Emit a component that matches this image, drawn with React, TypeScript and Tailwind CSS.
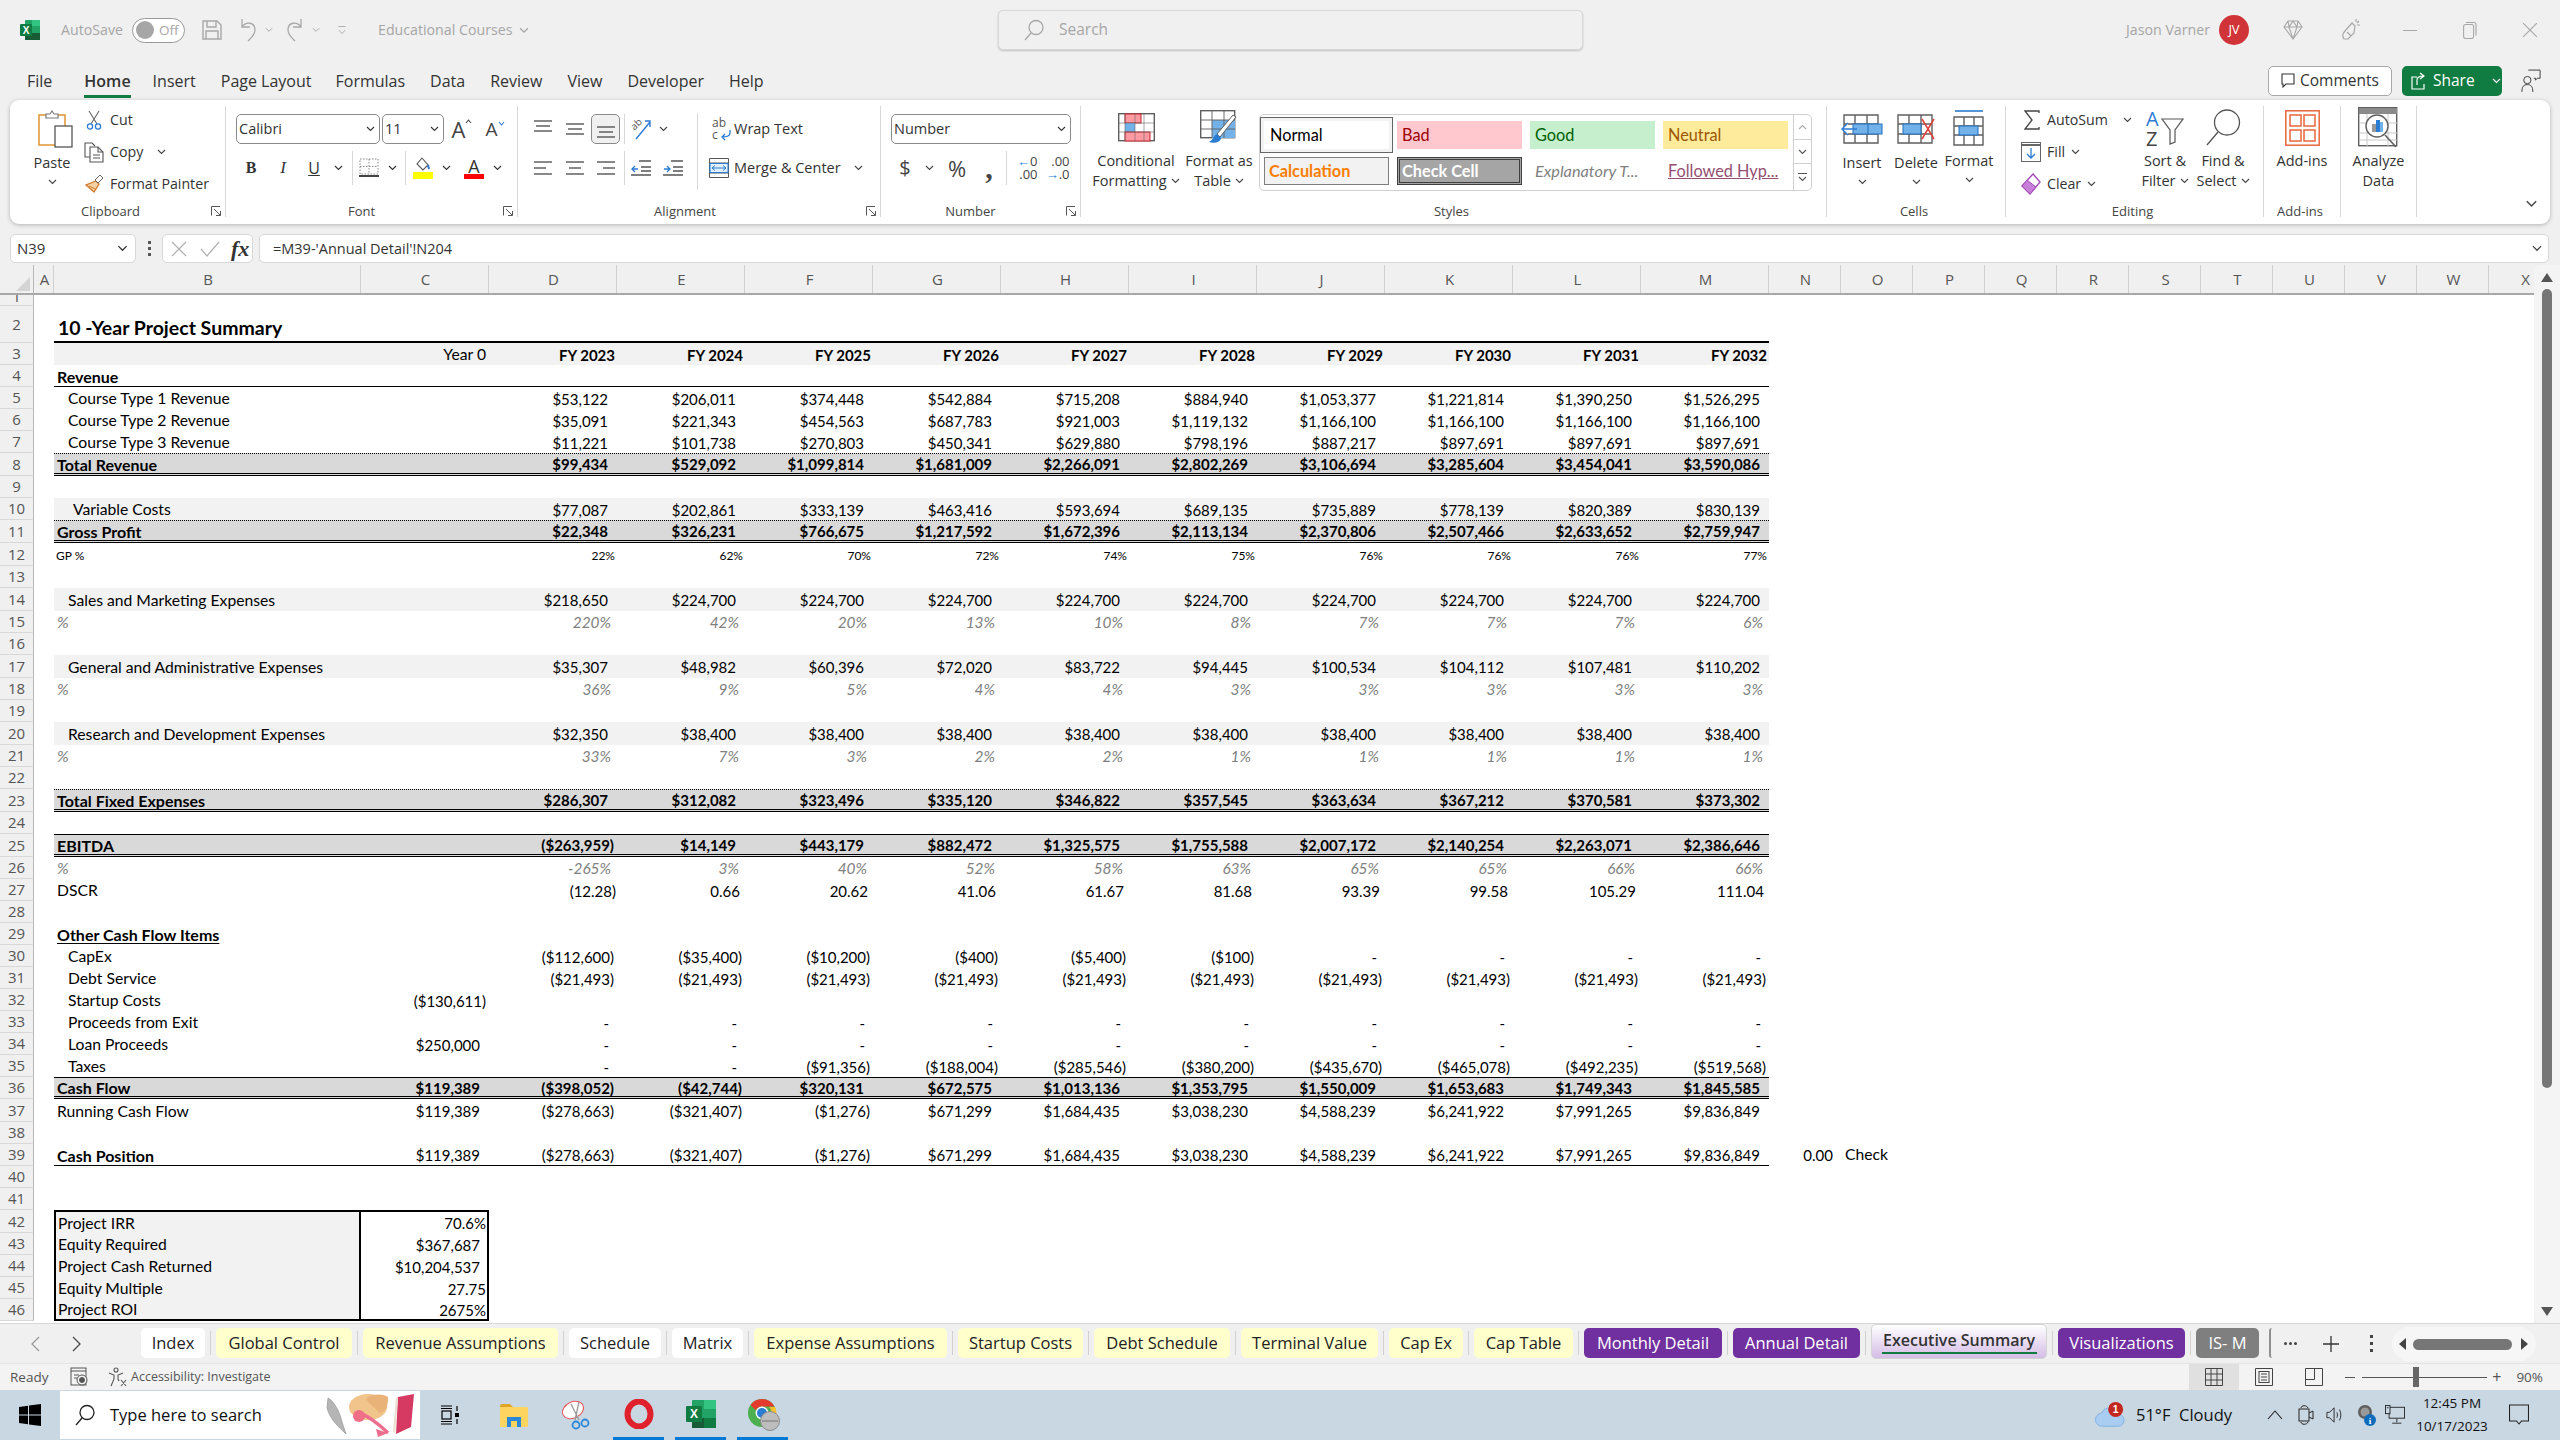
import React from 'react';

const Caret = ({ className = '' }: { className?: string }) => (
  <svg width="9" height="6" viewBox="0 0 9 6" className={className}><path d="M1 1l3.5 3.5L8 1" fill="none" stroke="currentColor" strokeWidth="1.1" /></svg>
);
const Launcher = () => (
  <svg width="10" height="10" viewBox="0 0 10 10" className="shrink-0 text-[#555]"><path d="M.5 9.5V.5h8.5M3 3l6.2 6.2M9.5 5v4.5H5" fill="none" stroke="currentColor" strokeWidth="1" /></svg>
);

const ExcelLogo = () => (
  <svg width="20" height="20" viewBox="0 0 20 20">
    <rect x="5" y="0" width="15" height="20" rx="1" fill="#21a366" />
    <rect x="12" y="0" width="8" height="6" fill="#33c481" />
    <rect x="5" y="13" width="15" height="7" fill="#185c37" />
    <rect x="0" y="4" width="12" height="12" rx="1" fill="#107c41" />
    <text x="6" y="13.5" fontSize="10" fontWeight="700" fill="#fff" textAnchor="middle" fontFamily="Liberation Sans">X</text>
  </svg>
);
const SaveIcon = () => (
  <svg width="20" height="20" viewBox="0 0 20 20" fill="none" stroke="#a8a8a8" strokeWidth="1.4"><path d="M1 1h14l4 4v14H1z" /><path d="M5 1v6h9V1M4 19v-8h12v8" /></svg>
);
const UndoIcon = ({ flip = false }: { flip?: boolean }) => (
  <svg width="18" height="24" viewBox="0 0 18 24" fill="none" stroke="#a8a8a8" strokeWidth="1.3" className={flip ? '-scale-x-100' : ''}><path d="M3 1v8h8M3 9c4-6 13-5 13 3 0 5-4 8-7 11" /></svg>
);
const CustomizeIcon = () => (
  <svg width="9" height="11" viewBox="0 0 9 11" fill="none" stroke="#a8a8a8"><path d="M.5 1h8M1 5l3.5 4L8 5" /></svg>
);
const MagIcon = ({ c = '#a8a8a8', s = 22 }: { c?: string; s?: number }) => (
  <svg width={s} height={s} viewBox="0 0 22 22" fill="none" stroke={c} strokeWidth="1.3"><circle cx="13" cy="8.5" r="7" /><path d="M8 14L2 21" /></svg>
);
const DiamondIcon = () => (
  <svg width="20" height="20" viewBox="0 0 20 20" fill="none" stroke="#a8a8a8" strokeWidth="1.1"><path d="M5 1h10l4 6-9 12L1 7zM1 7h18M6 7l4 12 4-12M5 1l1 6 4-6 4 6 1-6" /></svg>
);
const PenIcon = () => (
  <svg width="20" height="24" viewBox="0 0 20 24" fill="none" stroke="#a8a8a8" strokeWidth="1.2"><path d="M3 21c-2-3-1-6 1-8l7-8 3 3-1 7-6 6zM6 14l4 4M15 1v3M18 3l-2 2M19 7h-3" /></svg>
);
const CommentIcon = () => (
  <svg width="14" height="16" viewBox="0 0 14 16" fill="none" stroke="#333" strokeWidth="1.1"><path d="M1 1h12v10H5l-3 3v-3H1z" /></svg>
);
const ShareIcon = () => (
  <svg width="16" height="18" viewBox="0 0 16 18" fill="none" stroke="#fff" strokeWidth="1.2"><path d="M6 5H1v12h12v-5M6 13V8c0-3 3-4 6-4M9 1l4 3-4 3" /></svg>
);
const CoauthorIcon = () => (
  <svg width="22" height="26" viewBox="0 0 22 26" fill="none" stroke="#444" strokeWidth="1.1"><path d="M8 1h13v9h-3l-2 2v-2h-2" /><circle cx="7" cy="12" r="4" /><path d="M1 25c0-6 2-8 6-8s6 2 6 8" /></svg>
);

const PasteIcon = () => (
  <svg width="35" height="39" viewBox="0 0 35 39" fill="none">
    <rect x="1" y="6" width="26" height="30" fill="#fff" stroke="#e39a3f" strokeWidth="1.6" />
    <path d="M8 9V5h4l2-3 2 3h4v4z" fill="#fff" stroke="#7a7a7a" strokeWidth="1.2" />
    <rect x="17" y="17" width="17" height="21" fill="#fff" stroke="#555" strokeWidth="1.3" />
  </svg>
);
const CutIcon = () => (
  <svg width="16" height="20" viewBox="0 0 16 20" fill="none"><path d="M3 1l8 13M13 1L5 14" stroke="#666" strokeWidth="1.1" /><circle cx="4" cy="16.5" r="2.6" stroke="#2b7cd3" strokeWidth="1.3" /><circle cx="12" cy="16.5" r="2.6" stroke="#2b7cd3" strokeWidth="1.3" /></svg>
);
const CopyIcon = () => (
  <svg width="20" height="21" viewBox="0 0 20 21" fill="none" stroke="#555" strokeWidth="1.1"><path d="M6 15H1V1h7l3 3" fill="#fff" /><path d="M6 5h8l5 5v10H6z" fill="#fff" /><path d="M14 5v5h5M9 13h7M9 16h7" /></svg>
);
const PainterIcon = () => (
  <svg width="20" height="20" viewBox="0 0 20 20" fill="none"><path d="M12 7l3 3-5 8-8-7z" fill="#f3d2a6" stroke="#d4792a" strokeWidth="1.3" /><path d="M11 6l5-5 3 3-5 5z" fill="#fff" stroke="#666" /><path d="M5 12l6 3" stroke="#d4792a" /></svg>
);
const GrowA = ({ up }: { up: boolean }) => (
  <span className="relative flex items-end text-[#444]"><span className={up ? 'text-[22px] leading-[26px]' : 'text-[19px] leading-[24px]'}>A</span><svg width="7" height="5" viewBox="0 0 7 5" className={up ? 'mb-[18px]' : 'mb-[15px] text-[#2b7cd3]'}><path d={up ? 'M1 4l2.5-3L6 4' : 'M1 1l2.5 3L6 1'} fill="none" stroke="currentColor" strokeWidth="1.1" /></svg></span>
);
const BordersIcon = () => (
  <svg width="20" height="20" viewBox="0 0 20 20" fill="none"><path d="M1 1h18v15H1zM10 1v15M1 8.5h18" stroke="#888" strokeDasharray="1.5 1.5" /><path d="M0 18h20" stroke="#444" strokeWidth="2" /></svg>
);
const FillIcon = () => (
  <svg width="20" height="22" viewBox="0 0 20 22" fill="none"><path d="M9 1l6 7-5 5-6-6z" fill="#fff" stroke="#555" strokeWidth="1.1" /><path d="M15 8l1 4" stroke="#2b7cd3" strokeWidth="2" /><rect x="0" y="15" width="20" height="7" fill="#ffff00" /></svg>
);
const Lines = ({ rows }: { rows: [number, number][] }) => (
  <svg width="18" height="18" viewBox="0 0 18 18" stroke="#555" strokeWidth="1.4">{rows.map((r, i) => <path key={i} d={`M${r[0]} ${3 + i * 6}H${r[1]}`} />)}</svg>
);
const VLines = ({ ys }: { ys: [number, number, number] }) => (
  <svg width="18" height="22" viewBox="0 0 18 22" stroke="#555" strokeWidth="1.4">{ys.map((y, i) => <path key={i} d={`M${i === 1 ? 2 : 0} ${y}H${i === 1 ? 16 : 18}`} />)}</svg>
);
const OrientIcon = () => (
  <svg width="22" height="24" viewBox="0 0 22 24" fill="none"><text x="1" y="11" fontSize="10" fill="#555" fontFamily="Open Sans" transform="rotate(-45 6 8)">ab</text><path d="M6 22L20 5M15 4h5v6" stroke="#2b7cd3" strokeWidth="1.4" /></svg>
);
const IndentIcon = ({ out }: { out: boolean }) => (
  <svg width="20" height="18" viewBox="0 0 20 18" fill="none"><path d="M8 2h12M10 8h10M10 12h10M0 16h20" stroke="#555" strokeWidth="1.4" /><path d={out ? 'M7 10H1M4 7l-3 3 3 3' : 'M1 10h6M4 7l3 3-3 3'} stroke="#2b7cd3" strokeWidth="1.3" /></svg>
);
const WrapIcon = () => (
  <svg width="20" height="24" viewBox="0 0 20 24" fill="none"><text x="0" y="10" fontSize="12" fill="#555" fontFamily="Open Sans">ab</text><text x="0" y="22" fontSize="12" fill="#555" fontFamily="Open Sans">c</text><path d="M18 13v3c0 3-3 4-8 4M13 17l-3 3 3 3" stroke="#2b7cd3" strokeWidth="1.3" /></svg>
);
const MergeIcon = () => (
  <svg width="20" height="20" viewBox="0 0 20 20" fill="none"><path d="M.5.5h19v19H.5zM.5 5h19M.5 15h19" stroke="#555" /><rect x="1" y="5.5" width="18" height="9" fill="#e3f0fb" stroke="#2b7cd3" /><path d="M3 10h14M6 7.5L3 10l3 2.5M14 7.5l3 2.5-3 2.5" stroke="#2b7cd3" /></svg>
);
const IncDec = ({ inc }: { inc: boolean }) => (
  <span className="flex flex-col text-[13px] leading-[13px] text-[#444] items-end w-[27px]">
    <span className="flex items-center">{inc && <span className="text-[#2b7cd3] text-[13px]">←</span>}{inc ? '0' : '.00'}</span>
    <span className="flex items-center">{!inc && <span className="text-[#2b7cd3] text-[13px]">→</span>}{inc ? '.00' : '.0'}</span>
  </span>
);
const CondIcon = () => (
  <svg width="37" height="29" viewBox="0 0 37 29" fill="none">
    <rect x=".7" y=".7" width="35.6" height="27" fill="#fff" stroke="#5f5f5f" strokeWidth="1.4" />
    <rect x="7" y="1" width="16" height="9" fill="#ff9aa2" stroke="#c9262f" />
    <rect x="7" y="10" width="10" height="9" fill="#72b2e9" />
    <rect x="7" y="19" width="25" height="9" fill="#ff9aa2" stroke="#c9262f" />
    <path d="M7 1v27M17 1v27M26 1v27M1 10h35M1 19h35" stroke="#5f5f5f" strokeWidth=".8" opacity=".7" />
  </svg>
);
const FmtTableIcon = () => (
  <svg width="38" height="35" viewBox="0 0 38 35" fill="none">
    <rect x=".7" y=".7" width="34" height="27" fill="#fff" stroke="#5f5f5f" strokeWidth="1.4" />
    <rect x="12" y="10" width="23" height="18" fill="#72b2e9" />
    <path d="M12 1v27M24 1v27M1 10h34M1 19h34" stroke="#5f5f5f" strokeWidth=".9" />
    <path d="M36 7L20 27l-3-3L33 5z" fill="#fff" stroke="#5f5f5f" />
    <path d="M17 24c-3 1-3 5-8 8 5 2 12 0 12-4z" fill="#2b7cd3" />
  </svg>
);
const CellsIcon = ({ kind }: { kind: 'ins' | 'del' | 'fmt' }) => (
  <svg width="42" height={kind === 'fmt' ? 36 : 30} viewBox={kind === 'fmt' ? '0 0 42 36' : '0 0 42 30'} fill="none">
    {kind === 'fmt' ? (
      <g>
        <path d="M7 1h28" stroke="#2b7cd3" strokeWidth="1.6" />
        <path d="M6 7h29v28H6zM6 16h29M6 25h29M16 7v28M26 7v28" stroke="#5f5f5f" strokeWidth="1.4" />
        <rect x="11" y="16" width="19" height="9" fill="#72b2e9" stroke="#1f6fc0" />
      </g>
    ) : (
      <g>
        <path d="M3 1h34v28H3zM3 10h34M3 20h34M14 1v28M26 1v28" stroke="#5f5f5f" strokeWidth="1.4" />
        {kind === 'ins' ? (
          <g>
            <rect x="12" y="10" width="29" height="10" fill="#72b2e9" stroke="#1f6fc0" />
            <path d="M27 10v10" stroke="#1f6fc0" />
            <path d="M16 15H2M7 9l-6 6 6 6" stroke="#2b7cd3" strokeWidth="1.4" fill="#fff" />
          </g>
        ) : (
          <g>
            <rect x="8" y="10" width="18" height="10" fill="#72b2e9" stroke="#1f6fc0" />
            <path d="M27 5l12 20M39 5L27 25" stroke="#e0403a" strokeWidth="1.5" />
          </g>
        )}
      </g>
    )}
  </svg>
);
const SigmaIcon = () => (
  <svg width="16" height="20" viewBox="0 0 16 20" fill="none" stroke="#444" strokeWidth="1.3"><path d="M15 3V1H1l7 9-7 9h14v-2" /></svg>
);
const FillDownIcon = () => (
  <svg width="20" height="20" viewBox="0 0 20 20" fill="none"><rect x=".5" y=".5" width="19" height="19" fill="#fff" stroke="#666" /><path d="M0 3h20" stroke="#666" strokeWidth="2" /><path d="M10 6v10M6 12l4 4 4-4" stroke="#2b7cd3" strokeWidth="1.3" /></svg>
);
const ClearIcon = () => (
  <svg width="20" height="22" viewBox="0 0 20 22" fill="none"><path d="M12 1l7 8-10 12-8-8z" fill="#fff" stroke="#a44cb8" strokeWidth="1.4" /><path d="M1 13l5-6 9 7-6 7z" fill="#c67fd6" stroke="#a44cb8" /></svg>
);
const SortIcon = () => (
  <svg width="38" height="38" viewBox="0 0 38 38" fill="none">
    <text x="0" y="17" fontSize="20" fill="#2b7cd3" fontFamily="Open Sans">A</text>
    <text x="0" y="37" fontSize="20" fill="#444" fontFamily="Open Sans">Z</text>
    <path d="M16 10h21l-8 11v12l-5 2V21z" fill="#fff" stroke="#555" strokeWidth="1.2" />
  </svg>
);
const FindIcon = () => (
  <svg width="36" height="37" viewBox="0 0 36 37" fill="none" stroke="#555" strokeWidth="1.3"><circle cx="22" cy="13.5" r="12.5" /><path d="M13 23L2 36" /></svg>
);
const AddinsIcon = () => (
  <svg width="35" height="36" viewBox="0 0 35 36" fill="none" stroke="#e8663c" strokeWidth="1.5"><rect x=".8" y=".8" width="33.4" height="34.4" /><rect x="5" y="5" width="11" height="11" /><rect x="19" y="5" width="11" height="11" /><rect x="5" y="20" width="11" height="11" /><rect x="19" y="20" width="11" height="11" /></svg>
);
const AnalyzeIcon = () => (
  <svg width="41" height="41" viewBox="0 0 41 41" fill="none">
    <rect x=".7" y=".7" width="38" height="38" fill="#fff" stroke="#5f5f5f" strokeWidth="1.4" />
    <rect x="1" y="1" width="38" height="6" fill="#8a8a8a" />
    <path d="M1 16h38M1 26h38M1 33h38M9 7v32M30 7v32" stroke="#c8c8c8" />
    <circle cx="19" cy="19" r="11" fill="#fff" stroke="#5f5f5f" strokeWidth="1.4" />
    <rect x="14" y="17" width="4" height="8" fill="#9a9a9a" /><rect x="18" y="13" width="4" height="12" fill="#2b7cd3" /><rect x="22" y="15" width="3" height="10" fill="#72b2e9" />
    <path d="M27 28l11 12" stroke="#5f5f5f" strokeWidth="1.6" />
  </svg>
);
const NameX = () => <svg width="16" height="16" viewBox="0 0 16 16" stroke="#b0b0b0" strokeWidth="1.2"><path d="M1 1l14 14M15 1L1 15" /></svg>;
const NameCheck = () => <svg width="20" height="16" viewBox="0 0 20 16" fill="none" stroke="#b0b0b0" strokeWidth="1.2"><path d="M1 8l6 7L19 1" /></svg>;

const WinLogo = () => (
  <svg width="22" height="22" viewBox="0 0 22 22" fill="#000"><path d="M0 3l9-1.3V10.500H0zM10 1.500L22 0v10.500H10zM0 11.500h9v8.800L0 19zM10 11.500h12V22l-12-1.600z" /></svg>
);
const ArtIcon = () => (
  <svg width="92" height="44" viewBox="0 0 92 44" fill="none">
    <path d="M6 5c6 3 12 14 14 24l4 12c-6-6-16-14-19-26z" fill="#b5b5b5" stroke="#8c8c8c" strokeWidth=".6" />
    <ellipse cx="46" cy="14" rx="19" ry="13" fill="#f1c48c" />
    <path d="M44 6c6-6 18-5 22-2 0 10-2 14-8 16-4-4-10-8-14-14z" fill="#e9b278" />
    <path d="M36 20c8 1 22 12 30 20" stroke="#ee6f8d" strokeWidth="3.5" />
    <circle cx="37" cy="23" r="6" fill="#ef6f86" />
    <path d="M54 36l12 4-10 4z" fill="#ee6f8d" />
    <path d="M76 4l16-3-3 33-15 7z" fill="#d63a62" />
    <path d="M76 4l-3 36-2-1 3-34z" fill="#e8dfcf" />
  </svg>
);
const TaskViewIcon = () => (
  <svg width="20" height="20" viewBox="0 0 20 20" fill="none" stroke="#000" strokeWidth="1.2"><path d="M1 1h11v0M1 3.500h11M1 16.500h11M1 19h11" /><rect x="2" y="6" width="9" height="8" /><path d="M17 1v5M17 14v5" /><rect x="15" y="8" width="4" height="4" fill="#000" stroke="none" /></svg>
);
const ExplorerIcon = () => (
  <svg width="28" height="24" viewBox="0 0 28 24"><path d="M0 3c0-1 1-2 2-2h8l3 3h-13z" fill="#e0a526" /><rect x="0" y="4" width="28" height="20" rx="1" fill="#fcd45f" /><path d="M7 24v-10h14v10h-4v-6h-6v6z" fill="#2b88d8" /></svg>
);
const SnipIcon = () => (
  <svg width="30" height="30" viewBox="0 0 30 30" fill="none"><ellipse cx="12" cy="10" rx="11" ry="8" fill="#fff" stroke="#e8585a" strokeWidth="1" transform="rotate(-25 12 10)" /><path d="M10 4l8 16M18 2l-4 18" stroke="#999" strokeWidth="1.3" /><circle cx="15" cy="25" r="3.500" stroke="#2b88d8" strokeWidth="1.8" /><circle cx="24" cy="23" r="3.500" stroke="#2b88d8" strokeWidth="1.8" /></svg>
);
const OperaIcon = () => (
  <svg width="30" height="30" viewBox="0 0 30 30" fill="none"><ellipse cx="15" cy="15" rx="11.500" ry="12.500" stroke="#e0202b" strokeWidth="6" /></svg>
);
const ExcelTaskIcon = () => (
  <svg width="30" height="28" viewBox="0 0 30 28">
    <rect x="6" y="0" width="24" height="28" rx="1" fill="#21a366" /><rect x="18" y="0" width="12" height="9" fill="#33c481" /><rect x="6" y="18" width="24" height="10" fill="#185c37" /><rect x="18" y="18" width="12" height="10" fill="#107c41" />
    <rect x="0" y="6" width="16" height="16" rx="1" fill="#107c41" /><text x="8" y="18" fontSize="12" fontWeight="700" fill="#fff" textAnchor="middle" fontFamily="Liberation Sans">X</text>
  </svg>
);
const ChromeIcon = () => (
  <svg width="34" height="34" viewBox="0 0 34 34">
    <circle cx="15" cy="15" r="14" fill="#4caf50" />
    <path d="M15 1a14 14 0 0 1 12.500 7.500H15a6.500 6.500 0 0 0-6 4L3.500 7A14 14 0 0 1 15 1z" fill="#e33b2e" />
    <path d="M28 9a14 14 0 0 1-11 20l5-9a7 7 0 0 0 0-11z" fill="#fbc02d" />
    <circle cx="15" cy="15" r="6.500" fill="#fff" /><circle cx="15" cy="15" r="5" fill="#2b7cd3" />
    <circle cx="23" cy="23" r="9.500" fill="#bdbdbd" stroke="#8a8a8a" /><path d="M15 23h16" stroke="#8a8a8a" strokeWidth="1.4" />
  </svg>
);
const CloudIcon = () => (
  <svg width="32" height="28" viewBox="0 0 32 28"><path d="M8 26a7 7 0 0 1-1-14 9 9 0 0 1 17 1 6.500 6.500 0 0 1 1 13z" fill="#a8cdf0" stroke="#7fb2e3" /><circle cx="22" cy="8" r="8" fill="#c4271f" /><text x="22" y="12" fontSize="11" fontWeight="700" fill="#fff" textAnchor="middle" fontFamily="Liberation Sans">1</text></svg>
);
const MeetIcon = () => (
  <svg width="16" height="24" viewBox="0 0 16 24" fill="none" stroke="#222" strokeWidth="1"><path d="M3 5c0-3 6-3 7 0M3 19c0 3 6 3 7 0" /><rect x="1" y="6" width="10" height="12" /><path d="M11 10l4-2v8l-4-2" /></svg>
);
const SpeakerIcon = () => (
  <svg width="20" height="20" viewBox="0 0 20 20" fill="none" stroke="#222" strokeWidth="1"><path d="M1 7h3l5-5v16l-5-5H1zM12 7c1 2 1 4 0 6M15 4c2 4 2 8 0 12" /></svg>
);
const DriveIcon = () => (
  <svg width="20" height="24" viewBox="0 0 20 24"><circle cx="9" cy="9" r="7" fill="#5f5f5f" /><circle cx="9" cy="9" r="4.500" fill="#9a9a9a" /><circle cx="14" cy="17" r="6" fill="#0f6cbd" /><text x="14" y="21" fontSize="9" fontWeight="700" fill="#fff" textAnchor="middle" fontFamily="Liberation Serif">i</text></svg>
);
const NetIcon = () => (
  <svg width="22" height="22" viewBox="0 0 22 22" fill="none" stroke="#222"><rect x="4.500" y="2.500" width="17" height="12" /><path d="M13 15v4M8 20h10" /><rect x=".5" y=".5" width="5" height="9" fill="#c9d7e3" /><path d="M2 3h2" /></svg>
);
const NotifIcon = () => (
  <svg width="20" height="22" viewBox="0 0 20 22" fill="none" stroke="#222" strokeWidth="1.1"><path d="M.5 1h19v16h-7l-2.500 3-2.500-3h-7z" /></svg>
);
const MacroIcon = () => (
  <svg width="20" height="20" viewBox="0 0 20 20" fill="none" stroke="#555"><rect x="2" y="1" width="15" height="17" /><path d="M2 4h15M5 8h5M5 11h3" /><circle cx="13" cy="13" r="5" fill="#f3f3f3" /><circle cx="13" cy="13" r="2.500" fill="#555" /></svg>
);
const AccessIcon = () => (
  <svg width="20" height="20" viewBox="0 0 20 20" fill="none" stroke="#555" strokeWidth="1.1"><circle cx="8" cy="3" r="2" /><path d="M1 6l5 2v4l-3 7M15 6l-5 2v4l1 2M13 13l5 6M18 13l-5 6" /></svg>
);
const GridViewIcon = () => (
  <svg width="18" height="18" viewBox="0 0 18 18" fill="none" stroke="#444"><path d="M.5.500h17v17H.5zM6 .5v17M12 .5v17M.5 6h17M.5 12h17" /></svg>
);
const PageViewIcon = () => (
  <svg width="18" height="18" viewBox="0 0 18 18" fill="none" stroke="#444"><path d="M.5.500h17v17H.5z" /><rect x="4" y="3.500" width="10" height="11" /><path d="M6 6h6M6 9h6M6 12h6" /></svg>
);
const BreakViewIcon = () => (
  <svg width="18" height="18" viewBox="0 0 18 18" fill="none" stroke="#444"><path d="M.5.500h17v17H.5zM.5 11.500h9V.5" /></svg>
);

const Group = ({ className, label, launcher, lp = '', children }: { className: string; label: string; launcher?: boolean; lp?: string; children: React.ReactNode }) => (
  <div className={`${className} h-[116px] shrink-0 flex flex-col`}>
    <div className="h-[99px] flex">{children}</div>
    <div className="h-[16px] flex items-center pr-[4px]">
      <span className={`flex-1 text-center text-[13px] leading-[16px] text-[#444] ${lp}`}>{label}</span>
      {launcher && <Launcher />}
    </div>
  </div>
);
const Divider = () => <div className="w-px h-[111px] mt-[2px] bg-[#d8d8d8] shrink-0" />;

const Big = ({ icon, lines, className = '', iconH = 'h-[47px]', caret = true, below = false }: { icon: React.ReactNode; lines: string[]; className?: string; iconH?: string; caret?: boolean; below?: boolean }) => (
  <div className={`${className} flex flex-col items-center shrink-0 text-[14.5px] leading-[20px] text-[#333]`}>
    <div className={`${iconH} flex items-center justify-center`}>{icon}</div>
    {lines.map((l, i) => (
      <span key={i} className="whitespace-nowrap flex items-center gap-[4px]">{l}{i === lines.length - 1 && caret && lines.length > 1 && l !== '' && <Caret className="text-[#444]" />}</span>
    ))}
    {below && <Caret className="mt-[6px] text-[#444]" />}
  </div>
);
const Small = ({ icon, text, caret, capM = 'ml-[6px]' }: { icon: React.ReactNode; text: string; caret?: boolean; capM?: string }) => (
  <div className="h-[32px] flex items-center text-[14.2px] text-[#333] whitespace-nowrap">
    <span className="w-[26px] flex justify-start shrink-0">{icon}</span>
    <span>{text}</span>
    {caret && <Caret className={`${capM} text-[#444]`} />}
  </div>
);
const Combo = ({ className, text }: { className: string; text: string }) => (
  <div className={`${className} h-[30px] border border-[#8a8a8a] rounded-[5px] bg-white flex items-center justify-between pl-[2px] pr-[4px] text-[14.5px] text-[#333] shrink-0`}>
    <span>{text}</span><Caret className="text-[#333]" />
  </div>
);

const Ribbon = () => (
  <div className="mx-[10px] w-[2540px] h-[124px] shrink-0 bg-white rounded-[9px] shadow-[0_1px_4px_rgba(0,0,0,0.25)] flex py-[4px]">
    <Group className="w-[215px]" label="Clipboard" launcher lp="pl-[0px]">
      <div className="ml-[23px] w-[38px] flex flex-col items-center text-[14.5px] leading-[20px] text-[#333]">
        <div className="h-[49px] flex items-center pl-[6px]"><PasteIcon /></div>
        <span>Paste</span>
        <Caret className="mt-[6px] text-[#444]" />
      </div>
      <div className="ml-[13px] flex flex-col">
        <Small icon={<span className="pl-[2px]"><CutIcon /></span>} text="Cut" />
        <Small icon={<CopyIcon />} text="Copy" caret capM="ml-[14px]" />
        <Small icon={<PainterIcon />} text="Format Painter" />
      </div>
    </Group>
    <Divider />
    <Group className="w-[291px]" label="Font" launcher lp="pr-[6px]">
      <div className="pl-[10px] flex flex-col pt-[10px]">
        <div className="flex h-[30px] items-center">
          <Combo className="w-[144px]" text="Calibri" />
          <Combo className="w-[62px] ml-[2px]" text="11" />
          <span className="ml-[6px] w-[24px] flex justify-center"><GrowA up /></span>
          <span className="ml-[9px] w-[24px] flex justify-center"><GrowA up={false} /></span>
        </div>
        <div className="flex h-[24px] mt-[12px] items-center text-[#333]">
          <span className="w-[30px] text-center text-[16px] font-bold [font-family:'Liberation_Serif',serif]">B</span>
          <span className="w-[34px] text-center text-[17px] italic [font-family:'Liberation_Serif',serif]">I</span>
          <span className="w-[28px] text-center text-[16px] underline">U</span>
          <span className="w-[20px] flex justify-center"><Caret /></span>
          <span className="ml-[4px] w-px h-[34px] bg-[#d8d8d8]" />
          <span className="w-[32px] flex justify-center"><BordersIcon /></span>
          <span className="w-[14px] flex justify-center"><Caret /></span>
          <span className="ml-[6px] w-px h-[34px] bg-[#d8d8d8]" />
          <span className="w-[34px] flex justify-center"><FillIcon /></span>
          <span className="w-[12px] flex justify-center"><Caret /></span>
          <span className="ml-[10px] w-[24px] flex flex-col items-center leading-[16px]">
            <span className="text-[18px] leading-[16px] text-[#333]">A</span>
            <span className="block w-[20px] h-[5px] bg-[#ff0000]" />
          </span>
          <span className="ml-[5px] w-[12px] flex justify-center"><Caret /></span>
        </div>
      </div>
    </Group>
    <Divider />
    <Group className="w-[362px]" label="Alignment" launcher lp="pr-[14px]">
      <div className="w-[179px] pl-[9px] pt-[10px] flex flex-col shrink-0">
        <div className="h-[30px] flex items-center">
          <span className="w-[32px] flex justify-center"><VLines ys={[3, 8, 13]} /></span>
          <span className="w-[32px] flex justify-center"><VLines ys={[6, 11, 16]} /></span>
          <span className="w-[29px] h-[30px] flex justify-center items-center bg-[#f0f0f0] border border-[#8a8a8a] rounded-[5px]"><VLines ys={[9, 14, 19]} /></span>
          <span className="ml-[4px] w-px h-[30px] bg-[#d8d8d8]" />
          <span className="w-[32px] flex justify-center"><OrientIcon /></span>
          <span className="w-[12px] flex justify-center text-[#444]"><Caret /></span>
        </div>
        <div className="h-[24px] mt-[12px] flex items-center">
          <span className="w-[32px] flex justify-center"><Lines rows={[[0, 18], [0, 12], [0, 18]]} /></span>
          <span className="w-[32px] flex justify-center"><Lines rows={[[0, 18], [3, 15], [0, 18]]} /></span>
          <span className="w-[29px] flex justify-center"><Lines rows={[[0, 18], [6, 18], [0, 18]]} /></span>
          <span className="ml-[4px] w-px h-[34px] bg-[#d8d8d8]" />
          <span className="w-[32px] flex justify-center"><IndentIcon out /></span>
          <span className="w-[32px] flex justify-center"><IndentIcon out={false} /></span>
        </div>
      </div>
      <div className="w-px h-[77px] mt-[9px] bg-[#d8d8d8] shrink-0" />
      <div className="pl-[11px] pt-[10px] flex flex-col text-[14.5px] text-[#333] whitespace-nowrap">
        <div className="h-[30px] flex items-center pl-[3px]"><span className="w-[22px]"><WrapIcon /></span>Wrap Text</div>
        <div className="h-[24px] mt-[12px] flex items-center"><span className="w-[25px]"><MergeIcon /></span>Merge &amp; Center<Caret className="ml-[13px] text-[#444]" /></div>
      </div>
    </Group>
    <Divider />
    <Group className="w-[199px]" label="Number" launcher lp="pr-[6px]">
      <div className="pl-[10px] pt-[10px] flex flex-col">
        <Combo className="w-[180px]" text="Number" />
        <div className="h-[24px] mt-[12px] flex items-center text-[#444]">
          <span className="w-[28px] text-center text-[20px]">$</span>
          <span className="w-[20px] flex justify-center"><Caret /></span>
          <span className="w-[36px] text-center text-[22px]">%</span>
          <span className="w-[28px] text-center text-[30px] font-bold leading-[24px] [font-family:'Liberation_Serif',serif]">,</span>
          <span className="ml-[3px] w-px h-[34px] bg-[#d8d8d8]" />
          <span className="w-[34px] flex justify-center"><IncDec inc /></span>
          <span className="w-[30px] flex justify-center"><IncDec inc={false} /></span>
        </div>
      </div>
    </Group>
    <Divider />
    <Group className="w-[745px]" label="Styles">
      <Big className="ml-[15px] w-[80px]" icon={<CondIcon />} lines={['Conditional', 'Formatting']} />
      <Big className="ml-[4px] w-[78px]" icon={<FmtTableIcon />} lines={['Format as', 'Table']} />
      <div className="ml-[1px] mt-[10px] w-[553px] h-[77px] border border-[#d0d0d0] rounded-[5px] flex shrink-0 [font-family:Lato,sans-serif] text-[16.3px]">
        <div className="w-[532px] grid grid-cols-[133px_133px_133px_133px] grid-rows-[36px_36px] pt-[2px]">
          <div className="h-[36px] bg-[#f3f3f3] border border-[#666] p-[3px] flex"><div className="flex-1 bg-white flex items-center pl-[6px] text-[#000]">Normal</div></div>
          <div className="flex items-center justify-center"><div className="w-[125px] h-[28px] bg-[#ffc7ce] text-[#9c0006] flex items-center pl-[5px]">Bad</div></div>
          <div className="flex items-center justify-center"><div className="w-[125px] h-[28px] bg-[#c6efce] text-[#006100] flex items-center pl-[5px]">Good</div></div>
          <div className="flex items-center justify-center"><div className="w-[125px] h-[28px] bg-[#ffeb9c] text-[#9c5700] flex items-center pl-[5px]">Neutral</div></div>
          <div className="flex items-center justify-center"><div className="w-[125px] h-[28px] bg-[#f2f2f2] border border-[#7f7f7f] text-[#fa7d00] font-bold flex items-center pl-[4px]">Calculation</div></div>
          <div className="flex items-center justify-center"><div className="w-[125px] h-[28px] bg-[#a5a5a5] border-[3px] border-double border-[#3f3f3f] text-white font-bold flex items-center pl-[2px]">Check Cell</div></div>
          <div className="flex items-center justify-center"><div className="w-[125px] h-[28px] text-[#7f7f7f] italic flex items-center pl-[5px] whitespace-nowrap">Explanatory T...</div></div>
          <div className="flex items-center justify-center"><div className="w-[125px] h-[28px] text-[#954f72] underline flex items-center pl-[5px] whitespace-nowrap">Followed Hyp...</div></div>
        </div>
        <div className="w-[19px] ml-[1px] border-l border-[#d0d0d0] flex flex-col text-[#555]">
          <div className="h-[25px] flex items-center justify-center border-b border-[#d0d0d0] text-[#aaa]"><Caret className="rotate-180" /></div>
          <div className="h-[24px] flex items-center justify-center border-b border-[#d0d0d0]"><Caret /></div>
          <div className="flex-1 flex flex-col items-center justify-center gap-[2px]"><span className="w-[9px] h-px bg-[#555]" /><Caret /></div>
        </div>
      </div>
    </Group>
    <Divider />
    <Group className="w-[178px]" label="Cells">
      <Big className="ml-[5px] w-[60px]" iconH="h-[49px]" icon={<CellsIcon kind="ins" />} lines={['Insert']} caret={false} below />
      <Big className="w-[48px]" iconH="h-[49px]" icon={<CellsIcon kind="del" />} lines={['Delete']} caret={false} below />
      <Big className="w-[58px]" icon={<CellsIcon kind="fmt" />} lines={['Format']} caret={false} below />
    </Group>
    <Divider />
    <Group className="w-[257px]" label="Editing">
      <div className="ml-[15px] w-[119px] shrink-0 flex flex-col">
        <Small icon={<span className="pl-[3px]"><SigmaIcon /></span>} text="AutoSum" caret capM="ml-[15px]" />
        <Small icon={<FillDownIcon />} text="Fill" caret />
        <Small icon={<ClearIcon />} text="Clear" caret />
      </div>
      <Big className="w-[50px]" icon={<SortIcon />} lines={['Sort &', 'Filter']} />
      <Big className="ml-[5px] w-[56px]" icon={<FindIcon />} lines={['Find &', 'Select']} />
    </Group>
    <Divider />
    <Group className="w-[76px]" label="Add-ins">
      <Big className="w-[76px]" icon={<AddinsIcon />} lines={['Add-ins']} caret={false} />
    </Group>
    <Divider />
    <Group className="w-[75px]" label="">
      <Big className="w-[75px]" icon={<AnalyzeIcon />} lines={['Analyze', 'Data']} caret={false} />
    </Group>
    <Divider />
    <div className="flex-1 flex items-end justify-end pr-[12px] pb-[12px] text-[#444]"><Caret className="w-[13px] h-[8px]" /></div>
  </div>
);

const D = (s: string) => s.split(' ');
const rep = (s: string, n: number) => Array(n).fill(s) as string[];
const usd = (s: string) => D(s).map((x) => '$' + x);

type Kind = 'plain' | 'head' | 'sub' | 'total' | 'band' | 'line' | 'ruled';
const kindCls: Record<Kind, string> = {
  plain: '',
  head: 'bg-[#f2f2f2]',
  sub: 'bg-[#f2f2f2]',
  total: 'bg-[#d9d9d9] font-bold border-t border-b-[3px] border-black [border-top-style:dotted] [border-bottom-style:double]',
  band: 'bg-[#d9d9d9] font-bold border-t border-b-[3px] border-black [border-top-style:solid] [border-bottom-style:double]',
  line: 'font-bold border-b border-black',
  ruled: 'border-b border-black',
};
type R = { n: number; h: string; k?: Kind; label?: React.ReactNode; lc?: string; c?: string; cc?: string; v?: string[]; vk?: 'pct' | 'gp' | 'fy' | 'dscr'; extra?: boolean; box?: number };
const H22 = 'h-[22px]';
const H23 = 'h-[23px]';
const PCT = 'pl-[3px] italic text-[#808080] text-[15.7px]';
const rows: R[] = [
  { n: 3, h: H22, k: 'head', c: 'Year 0', cc: 'pr-[3px] text-[15.7px]', v: ['FY 2023', 'FY 2024', 'FY 2025', 'FY 2026', 'FY 2027', 'FY 2028', 'FY 2029', 'FY 2030', 'FY 2031', 'FY 2032'], vk: 'fy' },
  { n: 4, h: H22, k: 'line', label: 'Revenue', lc: 'pl-[3px] text-[16px]' },
  { n: 5, h: H22, label: 'Course Type 1 Revenue', lc: 'pl-[14px] text-[15.7px]', v: usd('53,122 206,011 374,448 542,884 715,208 884,940 1,053,377 1,221,814 1,390,250 1,526,295') },
  { n: 6, h: H22, label: 'Course Type 2 Revenue', lc: 'pl-[14px] text-[15.7px]', v: usd('35,091 221,343 454,563 687,783 921,003 1,119,132 1,166,100 1,166,100 1,166,100 1,166,100') },
  { n: 7, h: H22, label: 'Course Type 3 Revenue', lc: 'pl-[14px] text-[15.7px]', v: usd('11,221 101,738 270,803 450,341 629,880 798,196 887,217 897,691 897,691 897,691') },
  { n: 8, h: H23, k: 'total', label: 'Total Revenue', lc: 'pl-[3px] text-[16px]', v: usd('99,434 529,092 1,099,814 1,681,009 2,266,091 2,802,269 3,106,694 3,285,604 3,454,041 3,590,086') },
  { n: 9, h: H22 },
  { n: 10, h: H22, k: 'sub', label: 'Variable Costs', lc: 'pl-[19px] text-[15.7px]', v: usd('77,087 202,861 333,139 463,416 593,694 689,135 735,889 778,139 820,389 830,139') },
  { n: 11, h: H23, k: 'total', label: 'Gross Profit', lc: 'pl-[3px] text-[16px]', v: usd('22,348 326,231 766,675 1,217,592 1,672,396 2,113,134 2,370,806 2,507,466 2,633,652 2,759,947') },
  { n: 12, h: H23, label: 'GP %', lc: 'pl-[2px] text-[12px]', v: D('22% 62% 70% 72% 74% 75% 76% 76% 76% 77%'), vk: 'gp' },
  { n: 13, h: H22 },
  { n: 14, h: H23, k: 'sub', label: 'Sales and Marketing Expenses', lc: 'pl-[14px] text-[15.7px]', v: ['$218,650', ...rep('$224,700', 9)] },
  { n: 15, h: H22, label: '%', lc: PCT, v: D('220% 42% 20% 13% 10% 8% 7% 7% 7% 6%'), vk: 'pct' },
  { n: 16, h: H22 },
  { n: 17, h: H23, k: 'sub', label: 'General and Administrative Expenses', lc: 'pl-[14px] text-[15.7px]', v: usd('35,307 48,982 60,396 72,020 83,722 94,445 100,534 104,112 107,481 110,202') },
  { n: 18, h: H22, label: '%', lc: PCT, v: D('36% 9% 5% 4% 4% 3% 3% 3% 3% 3%'), vk: 'pct' },
  { n: 19, h: H22 },
  { n: 20, h: H23, k: 'sub', label: 'Research and Development Expenses', lc: 'pl-[14px] text-[15.7px]', v: ['$32,350', ...rep('$38,400', 9)] },
  { n: 21, h: H22, label: '%', lc: PCT, v: D('33% 7% 3% 2% 2% 1% 1% 1% 1% 1%'), vk: 'pct' },
  { n: 22, h: H22 },
  { n: 23, h: H23, k: 'total', label: 'Total Fixed Expenses', lc: 'pl-[3px] text-[16px]', v: usd('286,307 312,082 323,496 335,120 346,822 357,545 363,634 367,212 370,581 373,302') },
  { n: 24, h: H22 },
  { n: 25, h: H23, k: 'band', label: 'EBITDA', lc: 'pl-[3px] text-[16px]', v: ['($263,959)', ...usd('14,149 443,179 882,472 1,325,575 1,755,588 2,007,172 2,140,254 2,263,071 2,386,646')] },
  { n: 26, h: H22, label: '%', lc: PCT, v: D('-265% 3% 40% 52% 58% 63% 65% 65% 66% 66%'), vk: 'pct' },
  { n: 27, h: H22, label: 'DSCR', lc: 'pl-[3px] text-[15.7px]', v: D('(12.28) 0.66 20.62 41.06 61.67 81.68 93.39 99.58 105.29 111.04'), vk: 'dscr' },
  { n: 28, h: H22 },
  { n: 29, h: H22, label: <span className="font-bold underline underline-offset-2">Other Cash Flow Items</span>, lc: 'pl-[3px] text-[16px]' },
  { n: 30, h: H22, label: 'CapEx', lc: 'pl-[14px] text-[15.7px]', v: ['($112,600)', '($35,400)', '($10,200)', '($400)', '($5,400)', '($100)', '-', '-', '-', '-'] },
  { n: 31, h: H22, label: 'Debt Service', lc: 'pl-[14px] text-[15.7px]', v: rep('($21,493)', 10) },
  { n: 32, h: H22, label: 'Startup Costs', lc: 'pl-[14px] text-[15.7px]', c: '($130,611)', cc: 'pr-[3px]' },
  { n: 33, h: H22, label: 'Proceeds from Exit', lc: 'pl-[14px] text-[15.7px]', v: rep('-', 10) },
  { n: 34, h: H22, label: 'Loan Proceeds', lc: 'pl-[14px] text-[15.7px]', c: '$250,000', cc: 'pr-[9px]', v: rep('-', 10) },
  { n: 35, h: H22, label: 'Taxes', lc: 'pl-[14px] text-[15.7px]', v: ['-', '-', '($91,356)', '($188,004)', '($285,546)', '($380,200)', '($435,670)', '($465,078)', '($492,235)', '($519,568)'] },
  { n: 36, h: H22, k: 'band', label: 'Cash Flow', lc: 'pl-[3px] text-[16px]', c: '$119,389', cc: 'pr-[9px]', v: ['($398,052)', '($42,744)', ...usd('320,131 672,575 1,013,136 1,353,795 1,550,009 1,653,683 1,749,343 1,845,585')] },
  { n: 37, h: H23, label: 'Running Cash Flow', lc: 'pl-[3px] text-[15.7px]', c: '$119,389', cc: 'pr-[9px]', v: ['($278,663)', '($321,407)', '($1,276)', ...usd('671,299 1,684,435 3,038,230 4,588,239 6,241,922 7,991,265 9,836,849')] },
  { n: 38, h: H22 },
  { n: 39, h: H22, k: 'ruled', label: <span className="font-bold">Cash Position</span>, lc: 'pl-[3px] text-[16px]', c: '$119,389', cc: 'pr-[9px]', v: ['($278,663)', '($321,407)', '($1,276)', ...usd('671,299 1,684,435 3,038,230 4,588,239 6,241,922 7,991,265 9,836,849')], extra: true },
  { n: 40, h: H22 },
  { n: 41, h: H22 },
  { n: 42, h: H23, box: 1, label: 'Project IRR', c: '70.6%', cc: 'pr-[1px]' },
  { n: 43, h: H22, box: 2, label: 'Equity Required', c: '$367,687', cc: 'pr-[7px]' },
  { n: 44, h: H22, box: 2, label: 'Project Cash Returned', c: '$10,204,537', cc: 'pr-[7px]' },
  { n: 45, h: H22, box: 2, label: 'Equity Multiple', c: '27.75', cc: 'pr-[1px]' },
  { n: 46, h: H22, box: 3, label: 'Project ROI', c: '2675%', cc: 'pr-[1px]' },
];

const valCls = (v: string, vk?: R['vk']) => {
  if (vk === 'fy') return 'pr-[2px] font-bold';
  if (vk === 'gp') return 'pr-[2px] text-[12px]';
  if (vk === 'pct') return 'pr-[6px] italic text-[#808080] text-[15.4px]';
  if (vk === 'dscr') return v.endsWith(')') ? 'pr-[1px]' : 'pr-[5px]';
  if (v === '-') return 'pr-[8px]';
  return v.endsWith(')') ? 'pr-[3px]' : 'pr-[9px]';
};

const RowNum = ({ n, clip }: { n: number; clip?: boolean }) => (
  <div className={`w-[34px] h-full shrink-0 flex justify-center bg-[#f0f0f0] border-r border-b border-r-[#b8b8b8] border-b-[#d8d8d8] text-[15px] text-[#555] [font-family:'Open_Sans',sans-serif] ${clip ? 'items-end overflow-hidden leading-[18px]' : 'items-center'}`}>{n}</div>
);

const GridRow = ({ r }: { r: R }) => {
  if (r.box) {
    const t = r.box === 1 ? 'border-t-2' : '';
    const b = r.box === 3 ? 'border-b-2' : '';
    return (
      <div className={`${r.h} flex`}>
        <RowNum n={r.n} />
        <div className="w-[20px] shrink-0" />
        <div className={`w-[307px] bg-[#f2f2f2] border-l-2 border-r-2 border-black flex items-center pl-[2px] pt-[2px] text-[15.7px] ${t} ${b}`}>{r.label}</div>
        <div className={`w-[128px] border-r-2 border-black flex items-center justify-end pt-[2px] ${r.cc} ${t} ${b}`}>{r.c}</div>
      </div>
    );
  }
  return (
    <div className={`${r.h} flex`}>
      <RowNum n={r.n} />
      <div className="w-[20px] shrink-0" />
      <div className={`w-[1715px] shrink-0 flex items-center pt-[2px] ${kindCls[r.k || 'plain']}`}>
        <div className={`w-[307px] shrink-0 whitespace-nowrap ${r.lc || ''}`}>{r.label}</div>
        <div className={`w-[128px] shrink-0 text-right ${r.cc || ''}`}>{r.c}</div>
        {r.v ? r.v.map((x, i) => <div key={i} className={`w-[128px] shrink-0 text-right whitespace-nowrap ${valCls(x, r.vk)}`}>{x}</div>) : null}
      </div>
      {r.extra && (
        <>
          <div className="w-[72px] shrink-0 flex items-center justify-end pr-[8px]">0.00</div>
          <div className="w-[72px] shrink-0 flex items-center pl-[4px] text-[15.7px]">Check</div>
        </>
      )}
    </div>
  );
};

const ColHeaders = () => {
  const big = ['D', 'E', 'F', 'G', 'H', 'I', 'J', 'K', 'L', 'M'];
  const small = ['N', 'O', 'P', 'Q', 'R', 'S', 'T', 'U', 'V', 'W', 'X'];
  const cell = 'h-full shrink-0 flex items-center justify-center pl-[2px] border-r border-[#d0d0d0]';
  return (
    <div className="h-[30px] flex bg-[#f0f0f0] border-b-2 border-[#a8a8a8] text-[15px] text-[#555] shrink-0 overflow-hidden">
      <div className="w-[34px] h-full shrink-0 border-r border-[#b8b8b8] flex items-end justify-end pr-[3px] pb-[2px]"><div className="w-0 h-0 border-l-[14px] border-l-transparent border-b-[14px] border-b-[#d4d4d4]" /></div>
      <div className={`${cell} w-[20px]`}>A</div>
      <div className={`${cell} w-[307px]`}>B</div>
      <div className={`${cell} w-[128px]`}>C</div>
      {big.map((c) => <div key={c} className={`${cell} w-[128px]`}>{c}</div>)}
      {small.map((c) => <div key={c} className={`${cell} w-[72px]`}>{c}</div>)}
    </div>
  );
};

const tabStyle = {
  w: 'bg-white text-[#222]',
  y: 'bg-[#ffffcc] text-[#222]',
  p: 'bg-[#7030a0] text-white',
  g: 'bg-[#7f7f7f] text-white',
};
const tabs: { t: string; w: string; s: keyof typeof tabStyle }[] = [
  { t: 'Index', w: 'w-[64px]', s: 'w' },
  { t: 'Global Control', w: 'w-[136px]', s: 'y' },
  { t: 'Revenue Assumptions', w: 'w-[195px]', s: 'y' },
  { t: 'Schedule', w: 'w-[92px]', s: 'w' },
  { t: 'Matrix', w: 'w-[71px]', s: 'w' },
  { t: 'Expense Assumptions', w: 'w-[193px]', s: 'y' },
  { t: 'Startup Costs', w: 'w-[125px]', s: 'y' },
  { t: 'Debt Schedule', w: 'w-[136px]', s: 'y' },
  { t: 'Terminal Value', w: 'w-[137px]', s: 'y' },
  { t: 'Cap Ex', w: 'w-[74px]', s: 'y' },
  { t: 'Cap Table', w: 'w-[99px]', s: 'y' },
  { t: 'Monthly Detail', w: 'w-[138px]', s: 'p' },
  { t: 'Annual Detail', w: 'w-[127px]', s: 'p' },
];
const TabSep = () => <span className="w-px h-[24px] mx-[5px] bg-[#d0d0d0] shrink-0 self-center" />;

const TabBar = () => (
  <div className="h-[40px] shrink-0 bg-[#f0f0f0] border-t border-[#d8d8d8] flex text-[16.5px] [font-family:'Open_Sans',sans-serif] whitespace-nowrap">
    <div className="w-[141px] flex items-center text-[#666] shrink-0">
      <svg width="9" height="16" viewBox="0 0 9 16" fill="none" stroke="#999" strokeWidth="1.2" className="ml-[31px]"><path d="M8 1L1 8l7 7" /></svg>
      <svg width="9" height="16" viewBox="0 0 9 16" fill="none" stroke="#444" strokeWidth="1.2" className="ml-[32px]"><path d="M1 1l7 7-7 7" /></svg>
    </div>
    <div className="flex pt-[4px] h-[34px] shrink-0">
      {tabs.map((t) => (
        <React.Fragment key={t.t}>
          <div className={`${t.w} ${tabStyle[t.s]} h-[30px] rounded-[5px] flex items-center justify-center shrink-0`}>{t.t}</div>
          <TabSep />
        </React.Fragment>
      ))}
      <div className="w-[176px] h-[35px] -mt-[4px] rounded-b-[5px] rounded-t-[5px] border border-[#d4d4d4] bg-gradient-to-b from-[#ffffff] to-[#d5bde6] flex flex-col items-center pt-[5px] shrink-0">
        <span className="text-[#333] font-semibold leading-[20px] text-[16px]">Executive Summary</span>
        <span className="w-[155px] h-[2px] bg-[#107c41] mt-[2px]" />
      </div>
      <TabSep />
      <div className="w-[127px] bg-[#7030a0] text-white h-[30px] rounded-[5px] flex items-center justify-center shrink-0">Visualizations</div>
      <TabSep />
      <div className="w-[63px] bg-[#7f7f7f] text-white h-[30px] rounded-[5px] flex items-center justify-center shrink-0">IS- M</div>
      <span className="ml-[10px] w-[3px] h-[30px] border-l-2 border-[#8f8f8f] rounded-l-[3px] shrink-0" />
    </div>
    <span className="ml-[10px] w-[16px] flex items-center justify-center gap-[2px] shrink-0">
      <span className="w-[3px] h-[3px] rounded-full bg-[#444]" /><span className="w-[3px] h-[3px] rounded-full bg-[#444]" /><span className="w-[3px] h-[3px] rounded-full bg-[#444]" />
    </span>
    <svg width="16" height="16" viewBox="0 0 16 16" stroke="#333" strokeWidth="1.3" className="ml-[25px] self-center shrink-0"><path d="M8 0v16M0 8h16" /></svg>
    <span className="ml-[29px] w-[6px] flex flex-col items-center justify-center gap-[4px] shrink-0">
      <span className="w-[3px] h-[3px] bg-[#444]" /><span className="w-[3px] h-[3px] bg-[#444]" /><span className="w-[3px] h-[3px] bg-[#444]" />
    </span>
    <div className="ml-[18px] w-[144px] h-[34px] mt-[3px] rounded-full bg-[#f6f6f6] flex items-center pl-[7px] shrink-0">
      <span className="w-0 h-0 border-y-[6px] border-y-transparent border-r-[7px] border-r-[#444]" />
      <span className="ml-[7px] w-[99px] h-[11px] rounded-full bg-[#767676]" />
      <span className="ml-[9px] w-0 h-0 border-y-[6px] border-y-transparent border-l-[7px] border-l-[#444]" />
    </div>
  </div>
);

const StatusBar = () => (
  <div className="h-[27px] shrink-0 bg-[#f3f3f3] border-t border-[#e4e4e4] flex items-center [font-family:'Open_Sans',sans-serif] text-[#555]">
    <span className="ml-[10px] w-[40px] text-[13.5px]">Ready</span>
    <span className="ml-[19px] w-[20px]"><MacroIcon /></span>
    <span className="ml-[19px] w-[20px]"><AccessIcon /></span>
    <span className="ml-[3px] text-[12.5px] whitespace-nowrap">Accessibility: Investigate</span>
    <div className="ml-auto h-full w-[50px] bg-[#e0e0e0] flex items-center justify-center"><GridViewIcon /></div>
    <div className="h-full w-[50px] flex items-center justify-center"><PageViewIcon /></div>
    <div className="h-full w-[50px] flex items-center justify-center"><BreakViewIcon /></div>
    <span className="ml-[6px] w-[10px] h-px bg-[#555]" />
    <div className="ml-[7px] w-[125px] h-[20px] flex items-center">
      <span className="w-[51px] h-px bg-[#555]" />
      <span className="w-[6px] h-[20px] bg-[#666]" />
      <span className="w-[68px] h-px bg-[#555]" />
    </div>
    <span className="ml-[5px] text-[16px] leading-[16px] text-[#555]">+</span>
    <span className="ml-[15px] mr-[17px] text-[13.5px]">90%</span>
  </div>
);

const AppSlot = ({ children }: { children: React.ReactNode }) => (
  <div className="w-[51px] h-full ml-[11px] flex items-center justify-center border-b-[3px] border-[#0078d4] shrink-0">{children}</div>
);

const Taskbar = () => (
  <div className="h-[50px] shrink-0 bg-[#c9d7e3] flex items-center [font-family:'Open_Sans',sans-serif] text-[#111]">
    <div className="w-[60px] flex justify-center"><WinLogo /></div>
    <div className="w-[360px] h-[48px] bg-white flex items-center shrink-0">
      <span className="ml-[14px]"><MagIcon c="#222" /></span>
      <span className="ml-[14px] text-[16.5px] whitespace-nowrap">Type here to search</span>
      <span className="ml-auto mr-[6px]"><ArtIcon /></span>
    </div>
    <span className="ml-[20px]"><TaskViewIcon /></span>
    <span className="ml-[39px] w-[30px] flex justify-center"><ExplorerIcon /></span>
    <span className="ml-[32px] w-[30px] flex justify-center"><SnipIcon /></span>
    <div className="ml-[11px] flex h-full">
      <AppSlot><OperaIcon /></AppSlot>
      <AppSlot><ExcelTaskIcon /></AppSlot>
      <AppSlot><span className="pl-[3px] pt-[3px] flex"><ChromeIcon /></span></AppSlot>
    </div>
    <div className="ml-auto mr-[31px] flex items-center shrink-0">
      <span className="w-[30px] flex justify-center"><CloudIcon /></span>
      <span className="ml-[11px] w-[100px] text-[16.5px] whitespace-nowrap">51°F&nbsp; Cloudy</span>
      <svg width="16" height="10" viewBox="0 0 16 10" fill="none" stroke="#222" strokeWidth="1.1" className="ml-[31px]"><path d="M1 9l7-8 7 8" /></svg>
      <span className="ml-[14px] w-[18px] flex justify-center"><MeetIcon /></span>
      <span className="ml-[11px] w-[18px] flex justify-center"><SpeakerIcon /></span>
      <span className="ml-[12px] w-[20px] flex justify-center"><DriveIcon /></span>
      <span className="ml-[9px] w-[20px] flex justify-center"><NetIcon /></span>
      <div className="ml-[7px] w-[80px] flex flex-col items-center text-[13.5px] leading-[23px]"><span>12:45 PM</span><span>10/17/2023</span></div>
      <span className="ml-[17px] w-[20px] flex justify-center"><NotifIcon /></span>
    </div>
  </div>
);

export default function App() {
  return (
    <div className="w-[2560px] h-[1440px] overflow-hidden flex flex-col bg-[#f0f0f0] text-[#222] [font-family:'Open_Sans',sans-serif]">
      <div className="h-[60px] shrink-0 flex items-center text-[14.2px] text-[#a6a6a6] whitespace-nowrap">
        <span className="ml-[20px] w-[20px] flex"><ExcelLogo /></span>
        <span className="ml-[21px] w-[63px]">AutoSave</span>
        <span className="ml-[8px] w-[53px] h-[25px] rounded-full border border-[#999] bg-white flex items-center pl-[3px] gap-[5px]">
          <span className="w-[18px] h-[18px] rounded-full bg-[#a6a6a6]" /><span className="text-[13.5px]">Off</span>
        </span>
        <span className="ml-[17px] w-[20px] flex"><SaveIcon /></span>
        <span className="ml-[17px] w-[18px] flex"><UndoIcon /></span>
        <span className="ml-[8px] w-[8px] flex"><Caret /></span>
        <span className="ml-[13px] w-[18px] flex"><UndoIcon flip /></span>
        <span className="ml-[8px] w-[8px] flex"><Caret /></span>
        <span className="ml-[18px] w-[8px] flex"><CustomizeIcon /></span>
        <span className="ml-[32px] w-[133px]">Educational Courses</span>
        <span className="ml-[8px] w-[10px] flex"><Caret className="w-[12px] h-[7px]" /></span>
        <div className="ml-[469px] w-[585px] h-[40px] rounded-[5px] border border-[#d8d8d8] bg-[#f0f0f0] shadow-[0_1px_2px_rgba(0,0,0,0.2)] flex items-center pl-[24px] shrink-0">
          <MagIcon /><span className="ml-[14px] text-[15.5px]">Search</span>
        </div>
        <span className="ml-[543px] w-[82px]">Jason Varner</span>
        <span className="ml-[11px] w-[30px] h-[30px] rounded-full bg-[#d13438] text-white text-[13px] flex items-center justify-center">JV</span>
        <span className="ml-[34px] w-[20px] flex"><DiamondIcon /></span>
        <span className="ml-[38px] w-[20px] flex"><PenIcon /></span>
        <span className="ml-[39px] w-[20px] flex justify-center"><span className="w-[14px] h-px bg-[#a8a8a8]" /></span>
        <span className="ml-[40px] w-[20px] flex justify-center">
          <svg width="14" height="18" viewBox="0 0 14 18" fill="none" stroke="#a8a8a8" strokeWidth="1.1"><rect x=".6" y="3.5" width="10" height="14" rx="2" /><path d="M3 1.500h8a2 2 0 0 1 2 2v11" /></svg>
        </span>
        <span className="ml-[40px] w-[20px] flex justify-center">
          <svg width="14" height="14" viewBox="0 0 14 14" stroke="#a8a8a8" strokeWidth="1.1"><path d="M0 0l14 14M14 0L0 14" /></svg>
        </span>
      </div>

      <div className="h-[40px] shrink-0 flex items-center pt-[2px] text-[16px] text-[#333] whitespace-nowrap">
        <span className="ml-[27px]">File</span>
        <span className="ml-[32px] relative font-semibold">Home<span className="absolute left-0 right-0 top-[26px] h-[3px] bg-[#107c41]" /></span>
        <span className="ml-[22px]">Insert</span>
        <span className="ml-[25px]">Page Layout</span>
        <span className="ml-[24px]">Formulas</span>
        <span className="ml-[25px]">Data</span>
        <span className="ml-[25px]">Review</span>
        <span className="ml-[25px]">View</span>
        <span className="ml-[25px]">Developer</span>
        <span className="ml-[25px]">Help</span>
        <div className="ml-auto w-[124px] h-[30px] bg-white border border-[#a8a8a8] rounded-[5px] flex items-center justify-center gap-[5px] text-[15.5px]"><CommentIcon />Comments</div>
        <div className="ml-[10px] w-[100px] h-[30px] bg-[#107c41] rounded-[5px] text-white flex items-center pl-[9px] gap-[6px] text-[15.5px]"><ShareIcon />Share<Caret className="ml-[11px]" /></div>
        <span className="ml-[19px] mr-[19px] w-[20px] flex"><CoauthorIcon /></span>
      </div>

      <Ribbon />

      <div className="mt-[10px] h-[29px] shrink-0 flex items-center text-[#333]">
        <div className="ml-[10px] w-[126px] h-full bg-white border border-[#d8d8d8] rounded-[5px] flex items-center justify-between pl-[6px] pr-[7px] text-[15px]"><span>N39</span><Caret className="w-[11px] h-[7px] text-[#333]" /></div>
        <div className="w-[26px] flex flex-col items-center gap-[3px]"><span className="w-[3px] h-[3px] bg-[#555]" /><span className="w-[3px] h-[3px] bg-[#555]" /><span className="w-[3px] h-[3px] bg-[#555]" /></div>
        <div className="w-[91px] h-full bg-white border border-[#d8d8d8] rounded-[5px] flex items-center pl-[8px]">
          <NameX /><span className="ml-[13px] flex"><NameCheck /></span>
          <span className="ml-[11px] italic font-semibold text-[22px] leading-[20px] text-[#333] [font-family:'Liberation_Serif',serif]">fx</span>
        </div>
        <div className="ml-[6px] w-[2290px] h-full bg-white border border-[#d8d8d8] rounded-[5px] flex items-center justify-between pl-[13px] pr-[5px] text-[14.5px]"><span>=M39-'Annual Detail'!N204</span><Caret className="w-[12px] h-[7px] text-[#444]" /></div>
      </div>

      <div className="mt-[2px] h-[1058px] shrink-0 flex">
        <div className="w-[2534px] shrink-0 flex flex-col overflow-hidden">
          <ColHeaders />
          <div className="flex-1 bg-white [font-family:Lato,sans-serif] text-[15px] text-black">
            <div className="h-[11px] flex"><RowNum n={1} clip /></div>
            <div className="h-[37px] flex">
              <RowNum n={2} />
              <div className="w-[20px] shrink-0" />
              <div className="w-[1715px] shrink-0 border-b-[2px] border-black flex items-center pl-[4px] pt-[8px] text-[19.5px] font-bold">10 -Year Project Summary</div>
            </div>
            {rows.map((r) => <GridRow key={r.n} r={r} />)}
          </div>
        </div>
        <div className="w-[26px] shrink-0 pt-[8px] pb-[7px] bg-[#f4f4f4] flex flex-col items-center rounded-l-[6px]">
          <span className="w-0 h-0 border-x-[6px] border-x-transparent border-b-[9px] border-b-[#555]" />
          <span className="mt-[7px] w-[10px] h-[799px] rounded-full bg-[#767676]" />
          <span className="mt-auto w-0 h-0 border-x-[6px] border-x-transparent border-t-[9px] border-t-[#555]" />
        </div>
      </div>

      <TabBar />
      <StatusBar />
      <Taskbar />
    </div>
  );
}
